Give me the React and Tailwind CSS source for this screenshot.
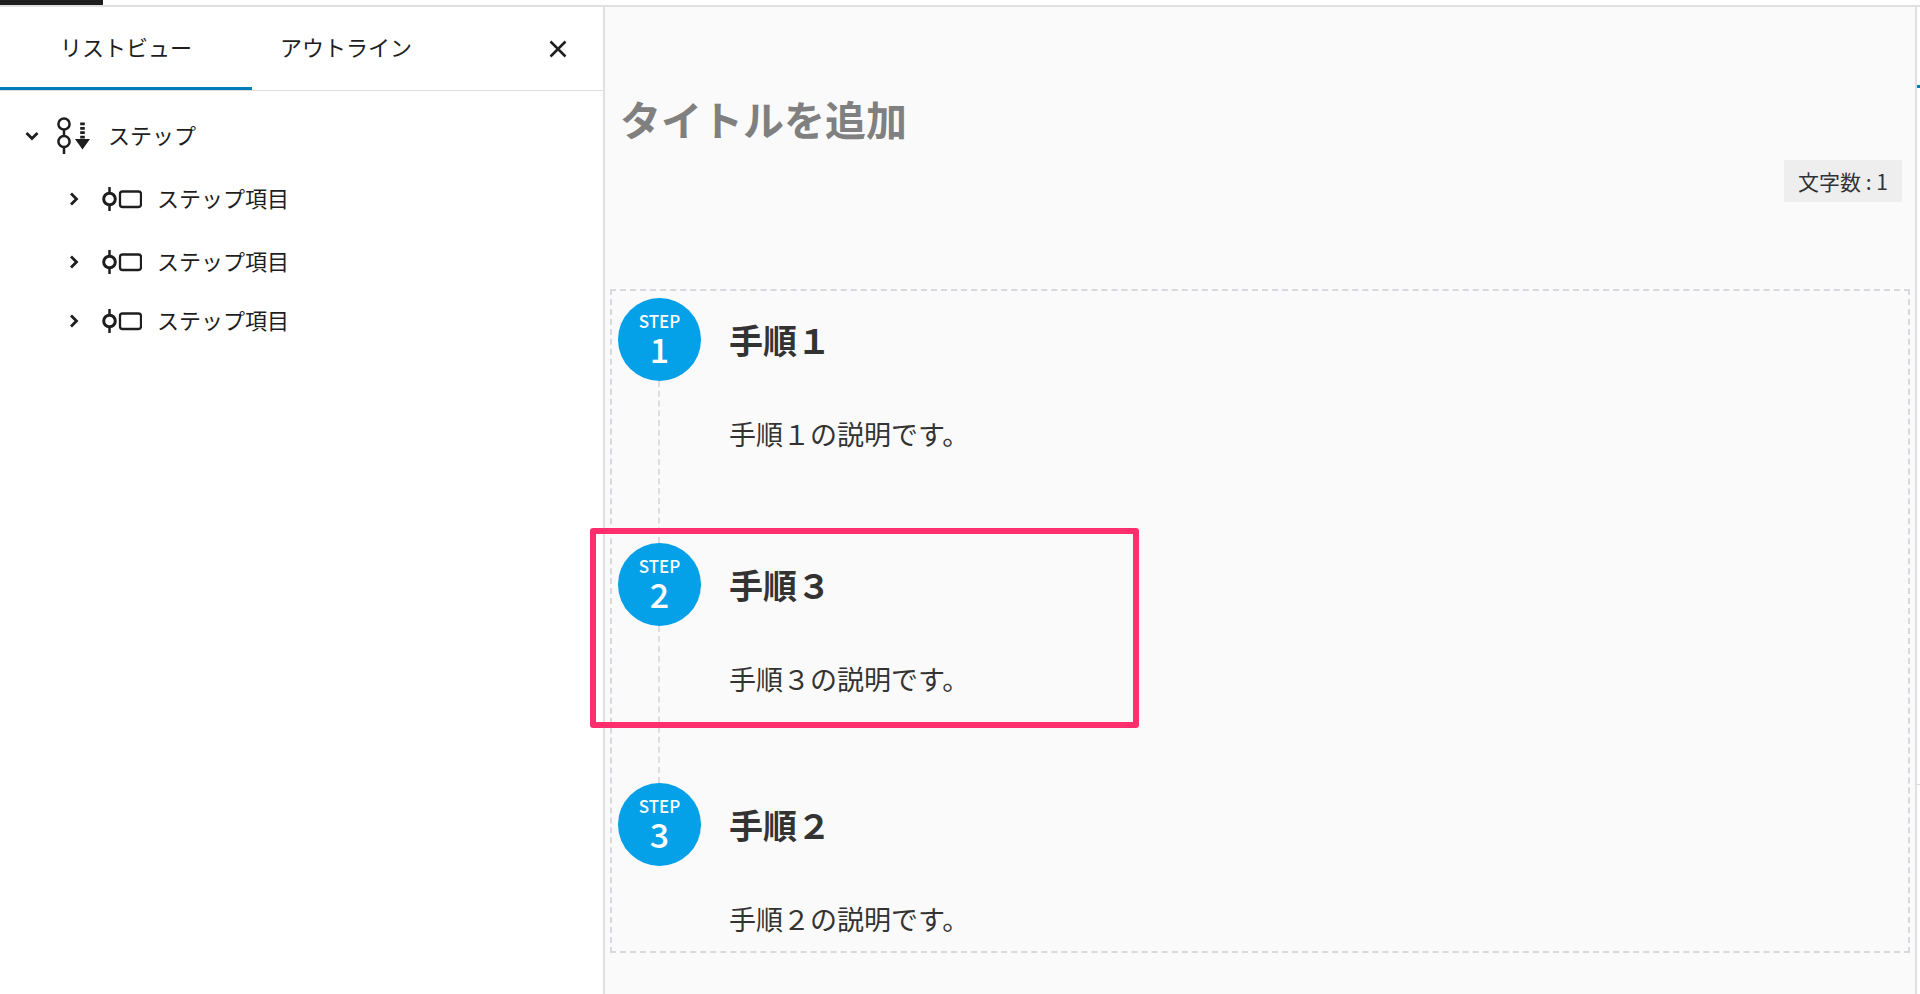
import React, { useState } from "react";
import classNames from "clsx";

const tabs = ["リストビュー", "アウトライン"];

const steps = [
    { title: "手順１", text: "手順１の説明です。", spacing: "pb-[84px]" },
    { title: "手順３", text: "手順３の説明です。", spacing: "pb-[79px]", highlighted: true },
    { title: "手順２", text: "手順２の説明です。", spacing: "pb-0" },
];

const Icons = {
    Close: props => (
        <svg viewBox="0 0 18 18" fill="none" stroke="currentColor" strokeWidth="2.5" {...props}>
            <path d="M1.5 1.5 16.5 16.5M16.5 1.5 1.5 16.5" />
        </svg>
    ),
    Chevron: props => (
        <svg viewBox="0 0 14 14" fill="none" stroke="currentColor" strokeWidth="2.8" {...props}>
            <path d="M4 1.5 9.5 7 4 12.5" />
        </svg>
    ),
    Steps: props => (
        <svg viewBox="0 0 36 38" fill="none" stroke="currentColor" strokeWidth="2.5" {...props}>
            <circle cx="8" cy="7" r="5.6" />
            <circle cx="8" cy="24.5" r="5.6" />
            <path d="M8 12.6v6.3M8 30.1v7" />
            <path d="M26.5 5.5v17" strokeWidth="4.6" strokeDasharray="2.8 1.6" />
            <path d="M19 22h15L26.5 32.5z" fill="currentColor" stroke="none" />
        </svg>
    ),
    StepItem: props => (
        <svg viewBox="0 0 40 24" fill="none" stroke="currentColor" strokeWidth="2.5" {...props}>
            <circle cx="7.5" cy="12" r="5.8" strokeWidth="3" />
            <path d="M7.5 0v6M7.5 18v6" />
            <rect x="18" y="4.5" width="21" height="15.5" rx="2.5" strokeWidth="2.3" />
        </svg>
    ),
};

const ListView = () => {
    const [active, setActive] = useState(tabs[0]);
    return (
        <aside className="w-[605px] shrink-0 border-r-2 border-[#e0e0e0] bg-white">
            <div className="flex h-[84px] items-stretch border-b border-[#ddd]">
                {tabs.map(tab => (
                    <button
                        key={tab}
                        className={classNames(
                            "text-[22px] leading-8 border-b-3 pb-[2px]",
                            tab == active ? "px-[60px] border-[#007cba]" : "px-7 border-transparent"
                        )}
                        onClick={() => setActive(tab)}
                    >
                        {tab}
                    </button>
                ))}
                <button aria-label="閉じる" className="ml-auto mr-9 flex items-center">
                    <Icons.Close className="h-[18px] w-[18px]" />
                </button>
            </div>
            <ul className="pt-[13px] text-[22px] leading-8">
                <li>
                    <a href="#steps" className="flex h-[63px] items-center pl-[25px]">
                        <Icons.Chevron className="h-[14px] w-[14px] rotate-90" />
                        <Icons.Steps className="ml-[17px] mr-4 h-[38px] w-9" />
                        <span className="pb-1">ステップ</span>
                    </a>
                </li>
                {steps.map((step, i) => (
                    <li key={i} className="h-[63px] last:h-[55px]">
                        <a href={`#step-${i + 1}`} className="flex h-full items-center pl-[67px]">
                            <Icons.Chevron className="h-[14px] w-[14px]" />
                            <Icons.StepItem className="ml-[21px] mr-[15px] h-6 w-10" />
                            <span className="pb-1">ステップ項目</span>
                        </a>
                    </li>
                ))}
            </ul>
        </aside>
    );
};

const Step = ({ number, step, last }) => (
    <li id={`step-${number}`} className="relative flex gap-7">
        <div className="flex w-[83px] shrink-0 flex-col">
            <div className="flex h-[83px] flex-col items-center justify-center rounded-full bg-[#04a0e8] pb-[2px] font-medium text-white">
                <span className="text-[17px] leading-5">STEP</span>
                <span className="text-[34px] leading-9">{number}</span>
            </div>
            {!last && <div className="ml-10 flex-1 border-l-2 border-dashed border-[#dedee2]" />}
        </div>
        <div className={step.spacing}>
            <h2 className="text-[34px] leading-[83px] font-bold">{step.title}</h2>
            <p className="mt-7 text-[27px] leading-[50px]">{step.text}</p>
        </div>
        {step.highlighted && (
            <div className="pointer-events-none absolute -left-7 -top-[15px] h-[200px] w-[549px] rounded-[3px] border-6 border-[#ff2e6c]" />
        )}
    </li>
);

const Editor = () => (
    <main className="flex-1 bg-[#fafafa] px-[5px] text-[#333]">
        <input
            aria-label="タイトルを追加"
            placeholder="タイトルを追加"
            className="mt-[82px] block h-[60px] w-full px-[10px] text-[41px] font-bold outline-none placeholder:text-[#808080]"
        />
        <div className="mt-[11px] mr-2 flex justify-end">
            <p className="bg-[#eee] px-[14px] py-[5px] text-[21px] leading-8">文字数 : 1</p>
        </div>
        <ol id="steps" className="mt-[87px] border-2 border-dashed border-[#d8d8de] py-[7px] px-[6px]">
            {steps.map((step, i) => (
                <Step key={i} number={i + 1} step={step} last={i == steps.length - 1} />
            ))}
        </ol>
    </main>
);

export default function App() {
    return (
        <div className="flex min-h-screen flex-col bg-white font-['Noto_Sans_CJK_JP',sans-serif] text-[#1e1e1e]">
            <header className="h-[7px] border-b-2 border-[#e0e0e0]">
                <div className="h-full w-[103px] bg-[#1e1e1e]" />
            </header>
            <div className="flex flex-1">
                <ListView />
                <Editor />
                <aside className="w-[5px] border-l-2 border-[#e0e0e0]">
                    <div className="h-[81px] border-b-3 border-[#007cba]" />
                    <div className="h-[697px] border-b border-[#ddd]" />
                </aside>
            </div>
        </div>
    );
}
